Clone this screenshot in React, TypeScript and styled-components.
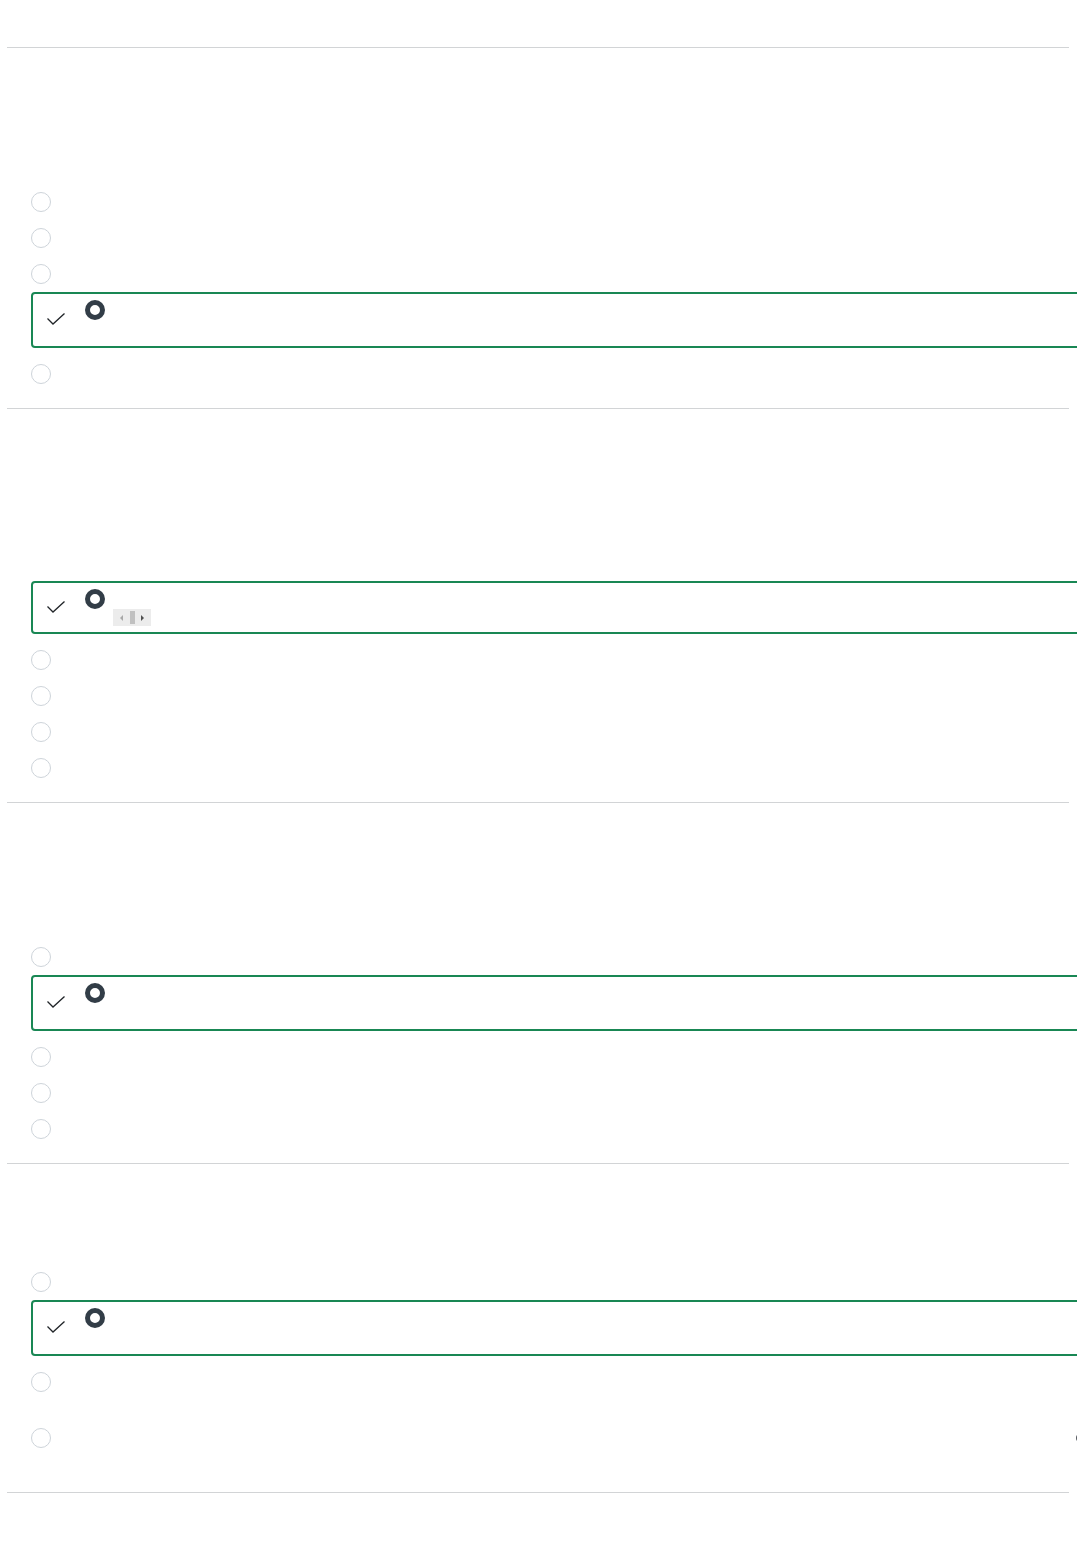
import styled, { createGlobalStyle } from "styled-components";

const GlobalStyle = createGlobalStyle`
  html, body {
    margin: 0;
    padding: 0;
    background: #fff;
    overflow-x: hidden;
    font-family: "Liberation Sans", Arial, sans-serif;
  }
`;

type Option = { picked?: boolean; tall?: boolean; scroller?: boolean; marker?: boolean };

type Question = {
  head: number;
  options: Option[];
};

const questions: Question[] = [
  { head: 136, options: [{}, {}, {}, { picked: true }, {}] },
  { head: 172, options: [{ picked: true, scroller: true }, {}, {}, {}, {}] },
  { head: 136, options: [{}, { picked: true }, {}, {}, {}] },
  { head: 100, options: [{}, { picked: true }, {}, { tall: true, marker: true }] },
];

export default function App() {
  return (
    <>
      <GlobalStyle />
      <Page>
        <TopGap />
        {questions.map((q, i) => (
          <Section key={i} $last={i === questions.length - 1}>
            <Head $h={q.head} />
            <List>
              {q.options.map((o, j) =>
                o.picked ? (
                  <Answer key={j} $h={o.scroller ? 53 : 56}>
                    <Check width="18" height="12" viewBox="0 0 18 12">
                      <polyline points="0.5,5.5 6,11 17.5,0.5" fill="none" stroke="#212529" strokeWidth="1.3" />
                    </Check>
                    <AnswerBody>
                      <Radio $checked />
                      {o.scroller && (
                        <Scroller>
                          <ArrowLeft />
                          <Thumb />
                          <ArrowRight />
                        </Scroller>
                      )}
                    </AnswerBody>
                  </Answer>
                ) : (
                  <Row key={j} $tall={o.tall}>
                    <Radio />
                    {o.marker && <Marker />}
                  </Row>
                )
              )}
            </List>
          </Section>
        ))}
      </Page>
    </>
  );
}

const Page = styled.div`
  margin: 0 8px 0 7px;
  min-height: 1559px;
`;

const TopGap = styled.div`
  height: 47px;
`;

const Section = styled.section<{ $last?: boolean }>`
  border-top: 1px solid #d2d4d6;
  border-bottom: ${(p) => (p.$last ? "1px solid #d2d4d6" : "none")};
  padding-bottom: 16px;
`;

const Head = styled.div<{ $h: number }>`
  height: ${(p) => p.$h}px;
`;

const List = styled.div`
  display: flex;
  flex-direction: column;
  padding-left: 24px;
`;

const Row = styled.div<{ $tall?: boolean }>`
  display: flex;
  align-items: center;
  height: ${(p) => (p.$tall ? 76 : 36)}px;
`;

const Radio = styled.span<{ $checked?: boolean }>`
  display: block;
  box-sizing: border-box;
  width: 20px;
  height: 20px;
  flex: none;
  border-radius: 50%;
  background: #fff;
  border: ${(p) => (p.$checked ? "5.5px solid #323d47" : "1px solid #ced4da")};
`;

const Answer = styled.div<{ $h: number }>`
  box-sizing: border-box;
  display: flex;
  align-items: center;
  width: 1060px;
  height: ${(p) => p.$h}px;
  margin-bottom: 8px;
  padding-left: 14px;
  border: 2px solid #198754;
  border-radius: 4px;
`;

const Check = styled.svg`
  display: block;
  flex: none;
  margin-top: -2px;
`;

const AnswerBody = styled.div`
  align-self: flex-start;
  display: flex;
  flex-direction: column;
  margin-left: 20px;
  padding-top: 6px;
`;

const Scroller = styled.div`
  display: flex;
  align-items: center;
  justify-content: space-between;
  box-sizing: border-box;
  width: 38px;
  height: 17px;
  margin-left: 28px;
  padding: 0 7px;
  background: #ececec;
`;

const Thumb = styled.span`
  width: 5px;
  height: 13px;
  background: #c0c0c0;
`;

const ArrowLeft = styled.span`
  width: 0;
  height: 0;
  border-top: 3.5px solid transparent;
  border-bottom: 3.5px solid transparent;
  border-right: 3.5px solid #a8a8a8;
`;

const ArrowRight = styled.span`
  width: 0;
  height: 0;
  border-top: 3.5px solid transparent;
  border-bottom: 3.5px solid transparent;
  border-left: 3.5px solid #505050;
`;

const Marker = styled.span`
  margin-left: auto;
  margin-right: -17px;
  width: 10px;
  height: 8px;
  border-radius: 4px;
  background: #555a60;
`;
